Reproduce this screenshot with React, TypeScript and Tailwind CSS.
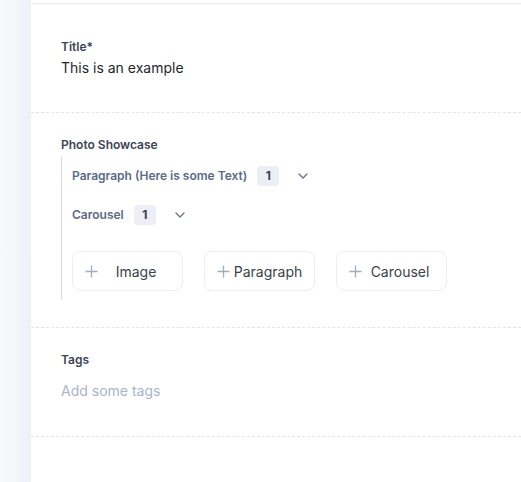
import { ChevronDown } from 'lucide-react';

const font = { fontFamily: 'Inter, "Noto Sans", sans-serif' };

function Plus() {
  return (
    <svg width="13" height="13" viewBox="0 0 13 13" className="shrink-0 text-[#a3acbd]">
      <path d="M6.5 0.5v12M0.5 6.5h12" stroke="currentColor" strokeWidth="1.3" fill="none" />
    </svg>
  );
}

function BlockRow({ label, count }: { label: string; count: number }) {
  return (
    <div className="flex items-center h-5">
      <span className="text-[12px] font-semibold text-[#5b6a8b]">{label}</span>
      <span className="ml-[10px] h-5 min-w-[22px] px-1.5 rounded bg-[#eceff6] text-[12px] font-bold text-[#3a4152] flex items-center justify-center">
        {count}
      </span>
      <ChevronDown className="ml-4 w-4 h-4 text-[#66748f]" strokeWidth={2} />
    </div>
  );
}

function AddButton({ label }: { label: string }) {
  return (
    <button className="w-[111px] h-10 flex items-center pl-3 pr-2 rounded-lg border border-[#eceef3] bg-white">
      <Plus />
      <span className="flex-1 text-center text-[14px] text-[#3a3f4b]">{label}</span>
    </button>
  );
}

export default function App() {
  const blocks = [
    { label: 'Paragraph (Here is some Text)', count: 1 },
    { label: 'Carousel', count: 1 },
  ];

  return (
    <div className="min-h-screen flex" style={font}>
      <div className="w-[31px] shrink-0 bg-gradient-to-r from-[#f8f9fc] via-[#f5f6fa] to-[#eef0f5]" />
      <div className="flex-1 bg-white pt-[3px]">
        <section className="border-t border-[#e8eaee] px-[30px] pt-[35px] pb-[34px]">
          <h3 className="text-[12px] leading-4 font-semibold text-[#3d4455]">Title*</h3>
          <p className="mt-[3px] text-[14px] leading-5 text-[#25272d]">This is an example</p>
        </section>

        <section className="border-t border-dashed border-[#e3e6ec] px-[30px] pt-6 pb-[27px]">
          <h3 className="text-[12px] leading-4 font-semibold text-[#3d4455]">Photo Showcase</h3>
          <div className="mt-1 border-l border-[#d5d9e0] pl-[10px] pt-[9px] pb-[9px]">
            <div className="flex flex-col gap-[19px]">
              {blocks.map((b) => (
                <BlockRow key={b.label} label={b.label} count={b.count} />
              ))}
            </div>
            <div className="mt-[26px] flex gap-[21px]">
              <AddButton label="Image" />
              <AddButton label="Paragraph" />
              <AddButton label="Carousel" />
            </div>
          </div>
        </section>

        <section className="border-t border-dashed border-[#e3e6ec] px-[30px] pt-6 pb-[35px]">
          <h3 className="text-[12px] leading-4 font-semibold text-[#3d4455]">Tags</h3>
          <input
            className="mt-[13px] block w-full text-[14px] leading-5 outline-none placeholder:text-[#a9b4c8] bg-transparent"
            placeholder="Add some tags"
          />
        </section>

        <div className="border-t border-dashed border-[#e3e6ec]" />
      </div>
    </div>
  );
}
